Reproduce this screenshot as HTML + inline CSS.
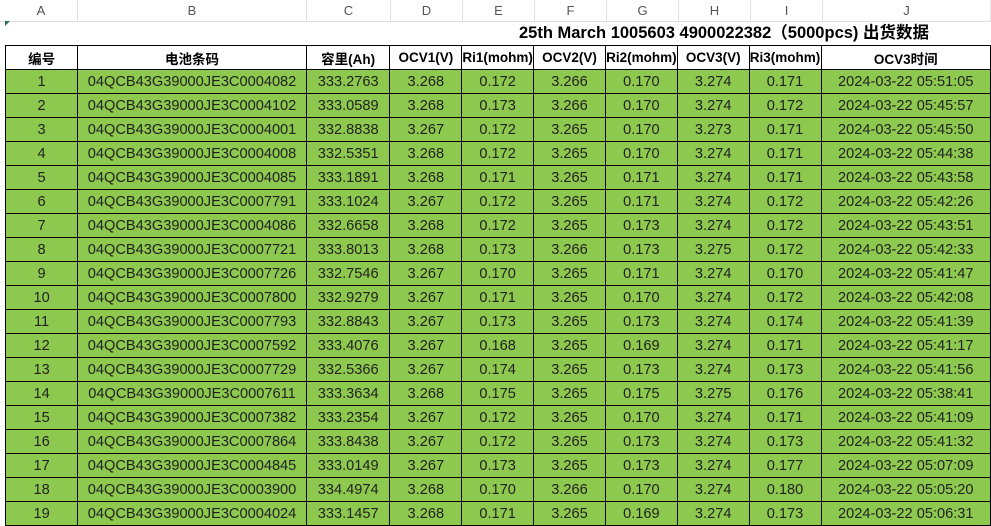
<!DOCTYPE html>
<html><head><meta charset="utf-8"><style>
body{margin:0;width:991px;height:525px;overflow:hidden;background:#fff;font-family:"Liberation Sans","Noto Sans CJK SC",sans-serif;position:relative}
.colh{position:absolute;top:0;left:0;height:21px;width:991px;background:#fff;border-bottom:1px solid #e0e0e0}
.colh div{position:absolute;top:0;height:21px;line-height:21px;text-align:center;color:#555;font-size:13px;border-right:1px solid #e2e2e2;box-sizing:border-box}
.title{position:absolute;top:21px;left:519px;height:24px;line-height:24px;font-size:16.5px;font-weight:bold;color:#000;white-space:nowrap}
table{position:absolute;top:45px;left:5px;border-collapse:collapse;table-layout:fixed}
td{border:1px solid #000;height:24px;padding:0;text-align:center;font-size:14.6px;color:#222;white-space:nowrap;overflow:hidden;box-sizing:border-box}
tr.h td{background:#fff;font-weight:bold;font-size:13.5px;color:#000}
tr.d td{background:#8dc94f}
.tri{position:absolute;left:5px;top:21px;width:0;height:0;border-top:5px solid #217346;border-right:5px solid transparent}
</style></head><body>
<div class="colh">
<div style="left:5px;width:73px">A</div><div style="left:78px;width:229px">B</div><div style="left:307px;width:84px">C</div><div style="left:391px;width:72px">D</div><div style="left:463px;width:72px">E</div><div style="left:535px;width:72px">F</div><div style="left:607px;width:72px">G</div><div style="left:679px;width:72px">H</div><div style="left:751px;width:72px">I</div><div style="left:823px;width:168px">J</div>
</div>
<div class="tri"></div>
<div class="title">25th March 1005603 4900022382（5000pcs) 出货数据</div>
<table>
<colgroup><col style="width:73px"><col style="width:229px"><col style="width:84px"><col style="width:72px"><col style="width:72px"><col style="width:72px"><col style="width:72px"><col style="width:72px"><col style="width:72px"><col style="width:170px"></colgroup>
<tr class="h"><td>编号</td><td>电池条码</td><td>容里(Ah)</td><td>OCV1(V)</td><td>Ri1(mohm)</td><td>OCV2(V)</td><td>Ri2(mohm)</td><td>OCV3(V)</td><td>Ri3(mohm)</td><td>OCV3时间</td></tr>
<tr class="d"><td>1</td><td>04QCB43G39000JE3C0004082</td><td>333.2763</td><td>3.268</td><td>0.172</td><td>3.266</td><td>0.170</td><td>3.274</td><td>0.171</td><td>2024-03-22 05:51:05</td></tr>
<tr class="d"><td>2</td><td>04QCB43G39000JE3C0004102</td><td>333.0589</td><td>3.268</td><td>0.173</td><td>3.266</td><td>0.170</td><td>3.274</td><td>0.172</td><td>2024-03-22 05:45:57</td></tr>
<tr class="d"><td>3</td><td>04QCB43G39000JE3C0004001</td><td>332.8838</td><td>3.267</td><td>0.172</td><td>3.265</td><td>0.170</td><td>3.273</td><td>0.171</td><td>2024-03-22 05:45:50</td></tr>
<tr class="d"><td>4</td><td>04QCB43G39000JE3C0004008</td><td>332.5351</td><td>3.268</td><td>0.172</td><td>3.265</td><td>0.170</td><td>3.274</td><td>0.171</td><td>2024-03-22 05:44:38</td></tr>
<tr class="d"><td>5</td><td>04QCB43G39000JE3C0004085</td><td>333.1891</td><td>3.268</td><td>0.171</td><td>3.265</td><td>0.171</td><td>3.274</td><td>0.171</td><td>2024-03-22 05:43:58</td></tr>
<tr class="d"><td>6</td><td>04QCB43G39000JE3C0007791</td><td>333.1024</td><td>3.267</td><td>0.172</td><td>3.265</td><td>0.171</td><td>3.274</td><td>0.172</td><td>2024-03-22 05:42:26</td></tr>
<tr class="d"><td>7</td><td>04QCB43G39000JE3C0004086</td><td>332.6658</td><td>3.268</td><td>0.172</td><td>3.265</td><td>0.173</td><td>3.274</td><td>0.172</td><td>2024-03-22 05:43:51</td></tr>
<tr class="d"><td>8</td><td>04QCB43G39000JE3C0007721</td><td>333.8013</td><td>3.268</td><td>0.173</td><td>3.266</td><td>0.173</td><td>3.275</td><td>0.172</td><td>2024-03-22 05:42:33</td></tr>
<tr class="d"><td>9</td><td>04QCB43G39000JE3C0007726</td><td>332.7546</td><td>3.267</td><td>0.170</td><td>3.265</td><td>0.171</td><td>3.274</td><td>0.170</td><td>2024-03-22 05:41:47</td></tr>
<tr class="d"><td>10</td><td>04QCB43G39000JE3C0007800</td><td>332.9279</td><td>3.267</td><td>0.171</td><td>3.265</td><td>0.170</td><td>3.274</td><td>0.172</td><td>2024-03-22 05:42:08</td></tr>
<tr class="d"><td>11</td><td>04QCB43G39000JE3C0007793</td><td>332.8843</td><td>3.267</td><td>0.173</td><td>3.265</td><td>0.173</td><td>3.274</td><td>0.174</td><td>2024-03-22 05:41:39</td></tr>
<tr class="d"><td>12</td><td>04QCB43G39000JE3C0007592</td><td>333.4076</td><td>3.267</td><td>0.168</td><td>3.265</td><td>0.169</td><td>3.274</td><td>0.171</td><td>2024-03-22 05:41:17</td></tr>
<tr class="d"><td>13</td><td>04QCB43G39000JE3C0007729</td><td>332.5366</td><td>3.267</td><td>0.174</td><td>3.265</td><td>0.173</td><td>3.274</td><td>0.173</td><td>2024-03-22 05:41:56</td></tr>
<tr class="d"><td>14</td><td>04QCB43G39000JE3C0007611</td><td>333.3634</td><td>3.268</td><td>0.175</td><td>3.265</td><td>0.175</td><td>3.275</td><td>0.176</td><td>2024-03-22 05:38:41</td></tr>
<tr class="d"><td>15</td><td>04QCB43G39000JE3C0007382</td><td>333.2354</td><td>3.267</td><td>0.172</td><td>3.265</td><td>0.170</td><td>3.274</td><td>0.171</td><td>2024-03-22 05:41:09</td></tr>
<tr class="d"><td>16</td><td>04QCB43G39000JE3C0007864</td><td>333.8438</td><td>3.267</td><td>0.172</td><td>3.265</td><td>0.173</td><td>3.274</td><td>0.173</td><td>2024-03-22 05:41:32</td></tr>
<tr class="d"><td>17</td><td>04QCB43G39000JE3C0004845</td><td>333.0149</td><td>3.267</td><td>0.173</td><td>3.265</td><td>0.173</td><td>3.274</td><td>0.177</td><td>2024-03-22 05:07:09</td></tr>
<tr class="d"><td>18</td><td>04QCB43G39000JE3C0003900</td><td>334.4974</td><td>3.268</td><td>0.170</td><td>3.266</td><td>0.170</td><td>3.274</td><td>0.180</td><td>2024-03-22 05:05:20</td></tr>
<tr class="d"><td>19</td><td>04QCB43G39000JE3C0004024</td><td>333.1457</td><td>3.268</td><td>0.171</td><td>3.265</td><td>0.169</td><td>3.274</td><td>0.173</td><td>2024-03-22 05:06:31</td></tr>
</table>
</body></html>
